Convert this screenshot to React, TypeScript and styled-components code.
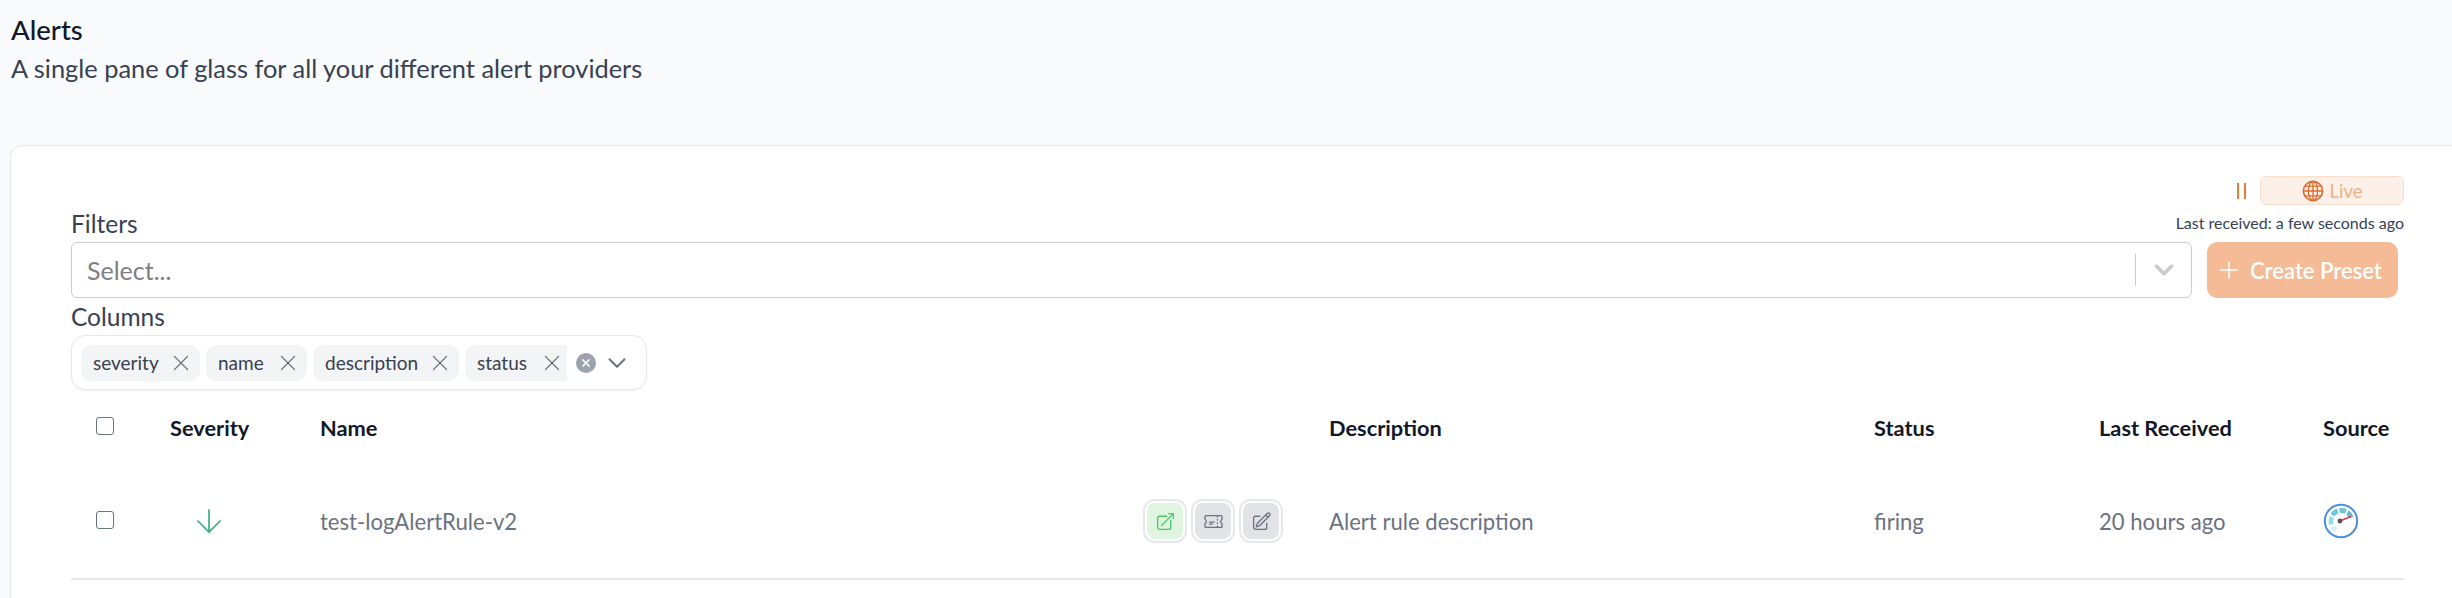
import React from "react";
import styled, { createGlobalStyle } from "styled-components";
import { ChevronDown, Plus, X, ArrowDown } from "lucide-react";

const Global = createGlobalStyle`
  html, body { margin: 0; padding: 0; height: 598px; overflow: hidden; background: #f9fafb; }
  body { font-family: "Lato", "Noto Sans", sans-serif; color: #374151; }
  * { box-sizing: border-box; }
`;

const Page = styled.div`
  width: 2452px;
  height: 598px;
  overflow: hidden;
  padding: 14px 0 0 11px;
`;
const Title = styled.h1`
  margin: 0;
  font-size: 27.5px;
  line-height: 32px;
  font-weight: 500;
  color: #111827;
`;
const Subtitle = styled.p`
  margin: 7px 0 0;
  font-size: 25.4px;
  line-height: 30px;
  color: #374151;
`;
const Card = styled.section`
  margin: 62px 0 0 -1px;
  width: 2500px;
  height: 600px;
  background: #fff;
  border: 1px solid #e5e7eb;
  border-radius: 12px;
  padding: 30px 0 0 60px;
`;
const Inner = styled.div`
  width: 2333px;
`;
const LiveRow = styled.div`
  display: flex;
  justify-content: flex-end;
  align-items: center;
  gap: 14px;
  height: 29px;
`;
const PauseMark = styled.span`
  width: 9px;
  height: 16px;
  border-left: 2px solid #ea7a34;
  border-right: 2px solid #ea7a34;
`;
const LiveBadge = styled.div`
  width: 144px;
  height: 29px;
  border-radius: 7px;
  border: 1.5px solid #fbdcc6;
  background: #fdf0e8;
  color: #f0b08a;
  font-size: 18.5px;
  display: flex;
  align-items: center;
  justify-content: center;
  gap: 6px;
  svg { color: #dd6b2a; }
`;
const FilterLabelRow = styled.div`
  display: flex;
  justify-content: space-between;
  align-items: flex-end;
  height: 37px;
`;
const FieldLabel = styled.div`
  font-size: 24.5px;
  line-height: 30px;
  color: #374151;
`;
const FilterLabel = styled(FieldLabel)`
  margin-bottom: 3px;
`;
const LastReceived = styled.div`
  font-size: 16px;
  line-height: 22px;
  margin-bottom: 8px;
  color: #374151;
`;
const FilterRow = styled.div`
  display: flex;
  gap: 15px;
  height: 56px;
`;
const SelectBox = styled.div`
  width: 2121px;
  border: 1px solid #ccc;
  border-radius: 6px;
  display: flex;
  align-items: center;
  padding-left: 15px;
  font-size: 25px;
  color: #808080;
`;
const SelectValue = styled.div`
  flex: 1;
`;
const Sep = styled.span`
  width: 1px;
  height: 32px;
  background: #ccc;
`;
const Chevron = styled.span`
  width: 55px;
  display: flex;
  justify-content: center;
  color: #ccc;
`;
const PresetButton = styled.button`
  width: 191px;
  border: 0;
  border-radius: 10px;
  background: #f4bb96;
  color: #fff;
  font: 600 22px "Lato", sans-serif;
  display: flex;
  align-items: center;
  justify-content: flex-start;
  padding: 0 0 0 8px;
  gap: 7px;
`;
const ColumnsLabel = styled(FieldLabel)`
  margin-top: 4px;
`;
const ColumnsBox = styled.div`
  margin-top: 3px;
  width: 576px;
  height: 55px;
  border: 1px solid #e5e7eb;
  border-radius: 14px;
  box-shadow: 0 1px 2px rgba(0, 0, 0, 0.05);
  display: flex;
  align-items: center;
  padding-left: 9px;
  gap: 6px;
`;
const Chip = styled.div<{ $w: number; $clip?: boolean }>`
  width: ${(p) => p.$w}px;
  height: 36px;
  border-radius: ${(p) => (p.$clip ? "10px 0 0 10px" : "10px")};
  background: #f3f4f6;
  display: flex;
  align-items: center;
  justify-content: space-between;
  padding: 0 ${(p) => (p.$clip ? 2 : 6)}px 0 12px;
  font-size: 19px;
  color: #374151;
  svg { color: #6b7280; }
`;
const ClearDot = styled.span`
  width: 20px;
  height: 20px;
  margin-left: 3px;
  border-radius: 50%;
  background: #9ca3af;
  color: #fff;
  display: flex;
  align-items: center;
  justify-content: center;
`;
const ColumnChevron = styled.span`
  display: flex;
  color: #6b7280;
`;
const Grid = styled.div<{ $h: number; $line?: boolean }>`
  display: grid;
  grid-template-columns: 99px 150px 1009px 545px 225px 224px 1fr;
  align-items: center;
  height: ${(p) => p.$h}px;
  ${(p) => (p.$line ? "border-bottom: 2px solid #e5e7eb;" : "")}
`;
const HeadCell = styled.div`
  font-size: 21.8px;
  font-weight: 700;
  color: #111827;
  padding-bottom: 2px;
`;
const Cell = styled.div`
  font-size: 22.1px;
  color: #6b7280;
  display: flex;
  align-items: center;
  padding-bottom: 2px;
`;
const Check = styled.span`
  display: block;
  width: 18px;
  height: 18px;
  margin: 0 0 5px 25px;
  border: 1.5px solid #6b7280;
  border-radius: 3px;
  background: #fff;
`;
const SeverityCell = styled(Cell)`
  padding-left: 20px;
  color: #3fb27f;
`;
const NameCell = styled(Cell)`
  justify-content: space-between;
  padding-right: 46px;
`;
const Actions = styled.div`
  display: flex;
  gap: 4px;
`;
const Action = styled.span<{ $green?: boolean }>`
  width: 44px;
  height: 44px;
  border: 2px solid #e5e7eb;
  border-radius: 12px;
  background: #fff;
  padding: 2px;
  display: flex;
  color: ${(p) => (p.$green ? "#4ec56b" : "#6b7280")};
  span {
    flex: 1;
    border-radius: 8px;
    background: ${(p) => (p.$green ? "#dff5df" : "#e2e3e6")};
    display: flex;
    align-items: center;
    justify-content: center;
  }
`;

const Hero = ({ d }: { d: string }) => (
  <svg width="21" height="21" viewBox="0 0 24 24" fill="none" stroke="currentColor" strokeWidth="1.5" strokeLinecap="round" strokeLinejoin="round">
    <path d={d} />
  </svg>
);
const OPEN = "M13.5 6H5.25A2.25 2.25 0 003 8.25v10.5A2.25 2.25 0 005.25 21h10.5A2.25 2.25 0 0018 18.75V10.5m-10.5 6L21 3m0 0h-5.25M21 3v5.25";
const TICKET = "M16.5 6v.75m0 3v.75m0 3v.75m0 3V18m-9-5.25h5.25M7.5 15h3M3.375 5.25c-.621 0-1.125.504-1.125 1.125v3.026a2.999 2.999 0 010 5.198v3.026c0 .621.504 1.125 1.125 1.125h17.25c.621 0 1.125-.504 1.125-1.125v-3.026a2.999 2.999 0 010-5.198V6.375c0-.621-.504-1.125-1.125-1.125H3.375z";
const PENCIL = "M16.862 4.487l1.687-1.688a1.875 1.875 0 112.652 2.652L10.582 16.07a4.5 4.5 0 01-1.897 1.13L6 18l.8-2.685a4.5 4.5 0 011.13-1.897l8.932-8.931zm0 0L19.5 7.125M18 14v4.75A2.25 2.25 0 0115.75 21H5.25A2.25 2.25 0 013 18.75V8.25A2.25 2.25 0 015.25 6H10";

const GridGlobe = () => (
  <svg width="22" height="22" viewBox="0 0 22 22" fill="none" stroke="currentColor" strokeWidth="1.3">
    <circle cx="11" cy="11" r="9.6" strokeWidth="1.6" />
    <ellipse cx="11" cy="11" rx="4.6" ry="9.6" />
    <path d="M11 1.4v19.2M1.4 11h19.2M2.8 6.2h16.4M2.8 15.8h16.4" />
  </svg>
);

const Gauge = () => (
  <svg width="36" height="36" viewBox="0 0 36 36">
    <circle cx="18" cy="18" r="16.2" fill="#fff" stroke="#4a8fdc" strokeWidth="2" />
    <path d="M6 22 A12.5 12.5 0 0 1 6.6 13 L11 15 A8 8 0 0 0 10.6 20.5Z" fill="#8fdcf5" />
    <path d="M7.5 11 A13 13 0 0 1 14 5.6 L15.5 10.4 A8 8 0 0 0 11.5 13.2Z" fill="#6ec3e0" />
    <path d="M16 5.2 A13 13 0 0 1 24 6.2 L21.8 10.8 A8 8 0 0 0 17 10Z" fill="#6ec3e0" />
    <path d="M25.6 7.2 A13 13 0 0 1 30.6 14 L26 15.4 A8 8 0 0 0 23.4 11.8Z" fill="#67b6c9" />
    <path d="M7 24.5 L11 22.6 A8 8 0 0 0 14 25 L11.5 29 A13 13 0 0 1 7 24.5Z" fill="#cdf1fb" />
    <path d="M17 18 L28 13.4" stroke="#d9323a" strokeWidth="1.4" />
    <circle cx="17" cy="18" r="2.4" fill="#555" />
  </svg>
);

const ChipClose = () => <X size={26} strokeWidth={1.1} />;

export default function App() {
  return (
    <Page>
      <Global />
      <Title>Alerts</Title>
      <Subtitle>A single pane of glass for all your different alert providers</Subtitle>
      <Card>
        <Inner>
          <LiveRow>
            <PauseMark />
            <LiveBadge><GridGlobe />Live</LiveBadge>
          </LiveRow>
          <FilterLabelRow>
            <FilterLabel>Filters</FilterLabel>
            <LastReceived>Last received: a few seconds ago</LastReceived>
          </FilterLabelRow>
          <FilterRow>
            <SelectBox>
              <SelectValue>Select...</SelectValue>
              <Sep />
              <Chevron><ChevronDown size={30} strokeWidth={3} /></Chevron>
            </SelectBox>
            <PresetButton><Plus size={28} strokeWidth={1.3} />Create Preset</PresetButton>
          </FilterRow>
          <ColumnsLabel>Columns</ColumnsLabel>
          <ColumnsBox>
            <Chip $w={119}>severity<ChipClose /></Chip>
            <Chip $w={101}>name<ChipClose /></Chip>
            <Chip $w={146}>description<ChipClose /></Chip>
            <Chip $w={102} $clip>status<ChipClose /></Chip>
            <ClearDot><X size={12} strokeWidth={3.5} /></ClearDot>
            <ColumnChevron><ChevronDown size={30} strokeWidth={1.6} /></ColumnChevron>
          </ColumnsBox>
          <Grid $h={76}>
            <div><Check /></div>
            <HeadCell>Severity</HeadCell>
            <HeadCell>Name</HeadCell>
            <HeadCell>Description</HeadCell>
            <HeadCell>Status</HeadCell>
            <HeadCell>Last Received</HeadCell>
            <HeadCell>Source</HeadCell>
          </Grid>
          <Grid $h={114} $line>
            <div><Check /></div>
            <SeverityCell><ArrowDown size={38} strokeWidth={1.1} /></SeverityCell>
            <NameCell>
              test-logAlertRule-v2
              <Actions>
                <Action $green><span><Hero d={OPEN} /></span></Action>
                <Action><span><Hero d={TICKET} /></span></Action>
                <Action><span><Hero d={PENCIL} /></span></Action>
              </Actions>
            </NameCell>
            <Cell>Alert rule description</Cell>
            <Cell>firing</Cell>
            <Cell>20 hours ago</Cell>
            <Cell><Gauge /></Cell>
          </Grid>
        </Inner>
      </Card>
    </Page>
  );
}
